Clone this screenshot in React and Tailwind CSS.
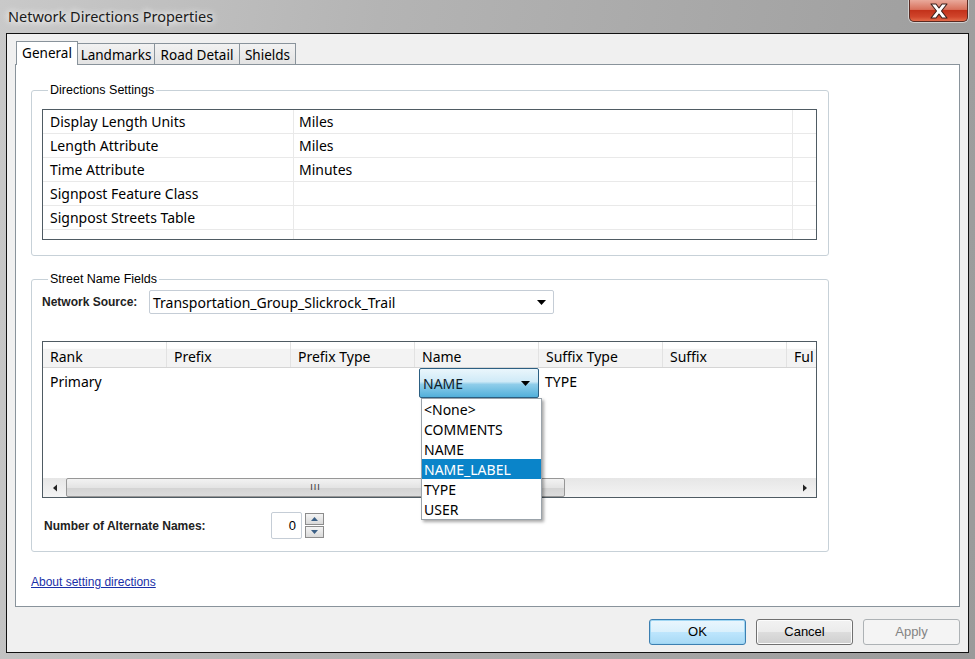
import React from "react";

const settings = [
  ["Display Length Units", "Miles"],
  ["Length Attribute", "Miles"],
  ["Time Attribute", "Minutes"],
  ["Signpost Feature Class", ""],
  ["Signpost Streets Table", ""],
];

const columns = ["Rank", "Prefix", "Prefix Type", "Name", "Suffix Type", "Suffix", "Ful"];

const options = ["<None>", "COMMENTS", "NAME", "NAME_LABEL", "TYPE", "USER"];

const Arrow = ({ dir = "down", className = "" }) => {
  const pts = {
    down: "0,0 9,0 4.5,5",
    up: "0,5 9,5 4.5,0",
    left: "5,0 5,9 0,4.5",
    right: "0,0 0,9 5,4.5",
  }[dir];
  const vb = dir === "down" || dir === "up" ? "0 0 9 5" : "0 0 5 9";
  return (
    <svg viewBox={vb} className={className}>
      <polygon points={pts} fill="currentColor" />
    </svg>
  );
};

const Button = ({ children, variant }) => {
  const styles = {
    primary:
      "border-[#3c7fb1] bg-[linear-gradient(to_bottom,#eaf6fd_0%,#d9f0fc_50%,#bee6fd_50%,#a7d9f5_100%)] text-black shadow-[inset_0_0_0_1px_#9fd6f3]",
    normal:
      "border-[#707070] bg-[linear-gradient(to_bottom,#f2f2f2_0%,#ebebeb_50%,#dddddd_50%,#cfcfcf_100%)] text-black shadow-[inset_0_0_0_1px_#fcfcfc]",
    disabled: "border-[#adb2b5] bg-[#f4f4f4] text-[#838383]",
  }[variant];
  return (
    <div
      className={`w-[97px] h-[26px] rounded-[3px] border flex items-center justify-center text-[13px] font-['Liberation_Sans',sans-serif] ${styles}`}
    >
      {children}
    </div>
  );
};

export default function App() {
  return (
    <div className="w-[975px] h-[659px] overflow-hidden flex flex-col bg-[linear-gradient(100deg,#c9c9c9_0%,#b4b4b4_35%,#a6a6a6_70%,#9a9a9a_100%)] font-['Noto_Sans',sans-serif] text-black">
      {/* title bar */}
      <div className="h-[33px] flex justify-between items-start">
        <div className="pl-[8px] pt-[5px] text-[14.5px] leading-[22px] text-[#1b1b1b] [text-shadow:0_0_6px_#ffffff,0_0_10px_#ffffff]">
          Network Directions Properties
        </div>
        <div className="mr-[7px] w-[59px] h-[22px] rounded-b-[5px] border border-t-0 border-[#5a2a22] bg-[linear-gradient(to_bottom,#e9a99b_0%,#d8715c_45%,#c3321b_50%,#d0452b_80%,#e26a49_100%)] flex items-center justify-center shadow-[0_0_0_1px_rgba(255,255,255,0.5)]">
          <svg viewBox="0 0 20 16" className="w-[20px] h-[16px]">
            <path
              d="M2 1 H7 L10 5 L13 1 H18 L12.5 8 L18 15 H13 L10 11 L7 15 H2 L7.5 8 Z"
              fill="#ffffff"
              stroke="#3b1f1b"
              strokeWidth="1.1"
              strokeLinejoin="round"
            />
          </svg>
        </div>
      </div>

      {/* dialog */}
      <div className="mx-[6px] h-[620px] border border-[#111] bg-[#f0f0f0] flex flex-col">
        <div className="pt-[8px] px-[8px] flex flex-col">
          {/* tabs */}
          <div className="flex items-end h-[22px] pl-[1px] text-[13.5px] leading-none">
            <div className="relative z-10 w-[62px] h-[24px] -mb-[1px] bg-white border border-b-0 border-[#89939b] flex items-center justify-center">
              General
            </div>
            {["Landmarks", "Road Detail", "Shields"].map((t, i) => (
              <div
                key={t}
                className={`h-[21px] pt-[3px] border border-b-0 border-[#89939b] -ml-px bg-[linear-gradient(to_bottom,#f2f2f2,#e3e3e3)] flex items-center justify-center ${
                  ["w-[78px]", "w-[86px]", "w-[57px]"][i]
                }`}
              >
                {t}
              </div>
            ))}
          </div>

          {/* panel */}
          <div className="h-[543px] bg-white border border-[#89939b] px-[15px] pt-[17px] flex flex-col">
            {/* Directions Settings */}
            <fieldset className="w-[798px] border border-[#c7d1d8] rounded-[3px] px-[10px] pb-[15px]">
              <legend className="ml-[6px] px-[2px] text-[12.5px] leading-[16px] font-['Liberation_Sans',sans-serif] text-black">
                Directions Settings
              </legend>
              <div className="mt-[11px] w-[775px] border border-[#4f5b63] text-[14px]">
                {settings.map(([k, v]) => (
                  <div key={k} className="flex h-[24px] border-b border-[#e9e9e9]">
                    <div className="w-[251px] border-r border-[#e9e9e9] pl-[7px] flex items-center">{k}</div>
                    <div className="w-[499px] border-r border-[#e9e9e9] pl-[5px] flex items-center">{v}</div>
                    <div className="flex-1" />
                  </div>
                ))}
                <div className="flex h-[9px]">
                  <div className="w-[251px] border-r border-[#e9e9e9]" />
                  <div className="w-[499px] border-r border-[#e9e9e9]" />
                </div>
              </div>
            </fieldset>

            {/* Street Name Fields */}
            <fieldset className="mt-[15px] w-[798px] border border-[#c7d1d8] rounded-[3px] px-[10px] pb-[12px]">
              <legend className="ml-[6px] px-[2px] text-[12.5px] leading-[16px] font-['Liberation_Sans',sans-serif] text-black">
                Street Name Fields
              </legend>

              <div className="mt-[3px] flex items-center h-[24px]">
                <div className="w-[107px] text-[12px] font-bold font-['Liberation_Sans',sans-serif] text-[#222]">
                  Network Source:
                </div>
                <div className="w-[405px] h-[24px] border border-[#c5cdd6] rounded-[2px] bg-white flex items-center justify-between pl-[3px] pr-[7px] text-[14px]">
                  <span>Transportation_Group_Slickrock_Trail</span>
                  <Arrow className="w-[9px] h-[5px] text-black" />
                </div>
              </div>

              {/* grid */}
              <div className="relative mt-[27px] w-[775px] h-[157px] border border-[#4f5b63] flex flex-col text-[14px]">
                <div className="h-[26px] overflow-hidden border-b border-[#d5d5d5] bg-[linear-gradient(to_bottom,#ffffff_0%,#ffffff_25%,#f3f3f3_30%,#f3f3f3_100%)] flex">
                  {columns.map((c) => (
                    <div
                      key={c}
                      className="w-[124px] shrink-0 border-r border-[#e2e2e2] pl-[7px] pt-[3px] flex items-center whitespace-nowrap"
                    >
                      {c}
                    </div>
                  ))}
                </div>

                <div className="flex-1 flex items-start">
                  <div className="w-[124px] shrink-0 pl-[7px] pt-[4px] leading-[20px]">Primary</div>
                  <div className="w-[124px] shrink-0" />
                  <div className="w-[124px] shrink-0" />
                  <div className="w-[124px] shrink-0 pl-[4px]">
                    <div className="w-[120px] h-[30px] border border-[#2c5f82] rounded-[2px] bg-[linear-gradient(to_bottom,#eaf6fc_0%,#cfeaf7_45%,#8fcdea_55%,#52b0da_100%)] flex items-center justify-between pl-[3px] pr-[8px] pt-[1px]">
                      <span className="text-[#10202a]">NAME</span>
                      <Arrow className="w-[9px] h-[5px] text-black" />
                    </div>
                  </div>
                  <div className="w-[124px] shrink-0 pl-[6px] pt-[4px] leading-[20px]">TYPE</div>
                </div>

                {/* horizontal scrollbar */}
                <div className="h-[19px] flex bg-[linear-gradient(to_bottom,#e6e6e6,#f4f4f4)]">
                  <div className="w-[23px] flex items-center justify-center">
                    <Arrow dir="left" className="w-[4px] h-[8px] text-[#222]" />
                  </div>
                  <div className="w-[499px] h-[19px] border border-[#979797] rounded-[2px] bg-[linear-gradient(to_bottom,#f2f2f2_0%,#e4e4e4_50%,#d3d3d3_50%,#dcdcdc_100%)] flex items-center justify-center">
                    <span className="text-[9px] leading-none text-[#333] font-['Liberation_Sans',sans-serif] tracking-[1px]">III</span>
                  </div>
                  <div className="flex-1" />
                  <div className="w-[23px] flex items-center justify-center">
                    <Arrow dir="right" className="w-[4px] h-[8px] text-[#222]" />
                  </div>
                </div>

                {/* open dropdown */}
                <div className="absolute z-10 left-[378px] top-[56px] w-[121px] border border-[#9ba3aa] bg-white shadow-[2px_2px_3px_rgba(0,0,0,0.35)]">
                  {options.map((o) => (
                    <div
                      key={o}
                      className={`h-[20px] pl-[2px] pt-[1px] flex items-center ${
                        o === "NAME_LABEL" ? "bg-[#0a84c9] text-white" : ""
                      }`}
                    >
                      {o}
                    </div>
                  ))}
                </div>
              </div>

              {/* alternate names */}
              <div className="mt-[14px] flex items-center">
                <div className="ml-[2px] w-[227px] text-[12px] font-bold font-['Liberation_Sans',sans-serif] text-[#222]">
                  Number of Alternate Names:
                </div>
                <div className="w-[31px] h-[27px] border border-[#c5cdd6] rounded-[2px] bg-white flex items-center justify-end pr-[5px] text-[13px] font-['Liberation_Sans',sans-serif]">
                  0
                </div>
                <div className="ml-[3px] flex flex-col gap-[1px]">
                  <div className="w-[19px] h-[12px] border border-[#8c8c8c] bg-[linear-gradient(to_bottom,#f4f4f4,#d9d9d9)] flex items-center justify-center">
                    <Arrow dir="up" className="w-[7px] h-[4px] text-[#3a5f86]" />
                  </div>
                  <div className="w-[19px] h-[12px] border border-[#8c8c8c] bg-[linear-gradient(to_bottom,#f4f4f4,#d9d9d9)] flex items-center justify-center">
                    <Arrow dir="down" className="w-[7px] h-[4px] text-[#3a5f86]" />
                  </div>
                </div>
              </div>
            </fieldset>

            <div className="mt-[21px] text-[12px] font-['Liberation_Sans',sans-serif]">
              <span className="text-[#1a2fa8] underline">About setting directions</span>
            </div>
          </div>
        </div>

        {/* buttons */}
        <div className="mt-[12px] pr-[8px] flex justify-end gap-[10px]">
          <Button variant="primary">OK</Button>
          <Button variant="normal">Cancel</Button>
          <Button variant="disabled">Apply</Button>
        </div>
      </div>
    </div>
  );
}
